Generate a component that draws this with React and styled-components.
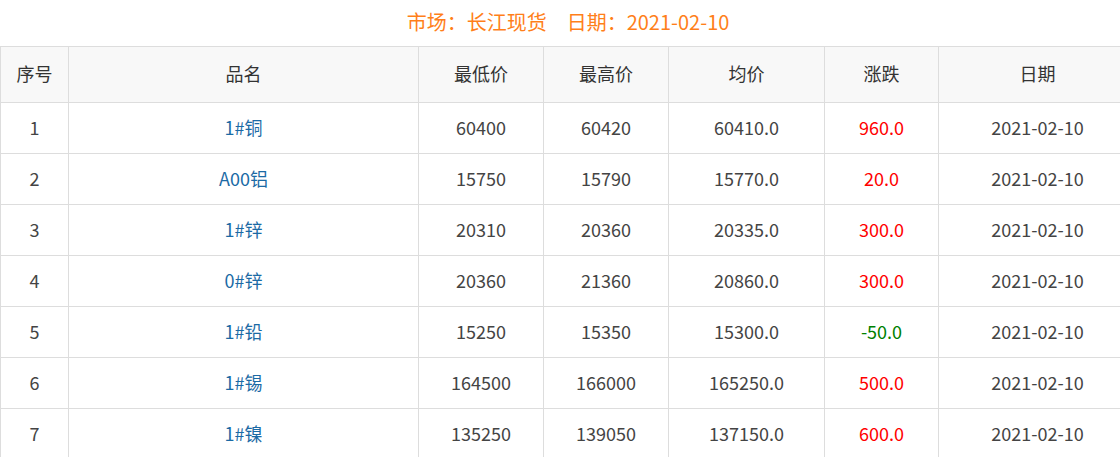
import React from 'react';
import styled, { createGlobalStyle } from 'styled-components';

const GlobalStyle = createGlobalStyle`
  html, body {
    overflow: hidden;
  }
  body {
    margin: 0;
    background: #fff;
    font-family: "Noto Sans CJK SC", "Noto Sans", sans-serif;
  }
`;

const Page = styled.div`
  width: 1136px;
`;

const Title = styled.div`
  height: 46px;
  line-height: 44px;
  text-align: center;
  color: #ff7f1a;
  font-size: 20px;
`;

const Table = styled.table`
  width: 1136px;
  border-collapse: collapse;
  table-layout: fixed;
`;

const Th = styled.th`
  height: 56px;
  box-sizing: border-box;
  background: #f8f8f8;
  border: 1px solid #dddddd;
  font-weight: normal;
  font-size: 18px;
  color: #333;
  padding: 0 0 3px;
`;

const Td = styled.td`
  height: 51px;
  box-sizing: border-box;
  border: 1px solid #dddddd;
  text-align: center;
  font-size: 18px;
  color: ${({ $color }) => $color || '#444'};
  padding: 0 0 3px;
`;

const columns = [
  { title: '序号', width: 68 },
  { title: '品名', width: 350 },
  { title: '最低价', width: 125 },
  { title: '最高价', width: 125 },
  { title: '均价', width: 156 },
  { title: '涨跌', width: 114 },
  { title: '日期', width: 198 },
];

const rows = [
  ['1', '1#铜', '60400', '60420', '60410.0', '960.0'],
  ['2', 'A00铝', '15750', '15790', '15770.0', '20.0'],
  ['3', '1#锌', '20310', '20360', '20335.0', '300.0'],
  ['4', '0#锌', '20360', '21360', '20860.0', '300.0'],
  ['5', '1#铅', '15250', '15350', '15300.0', '-50.0'],
  ['6', '1#锡', '164500', '166000', '165250.0', '500.0'],
  ['7', '1#镍', '135250', '139050', '137150.0', '600.0'],
];

export default function App() {
  return (
    <Page>
      <GlobalStyle />
      <Title>市场：长江现货　日期：2021-02-10</Title>
      <Table>
        <colgroup>
          {columns.map((c) => (
            <col key={c.title} style={{ width: c.width }} />
          ))}
        </colgroup>
        <thead>
          <tr>
            {columns.map((c) => (
              <Th key={c.title}>{c.title}</Th>
            ))}
          </tr>
        </thead>
        <tbody>
          {rows.map((r) => (
            <tr key={r[0]}>
              <Td>{r[0]}</Td>
              <Td $color="#1b6aa5">{r[1]}</Td>
              <Td>{r[2]}</Td>
              <Td>{r[3]}</Td>
              <Td>{r[4]}</Td>
              <Td $color={r[5].startsWith('-') ? '#008000' : '#ff0000'}>{r[5]}</Td>
              <Td>2021-02-10</Td>
            </tr>
          ))}
        </tbody>
      </Table>
    </Page>
  );
}
